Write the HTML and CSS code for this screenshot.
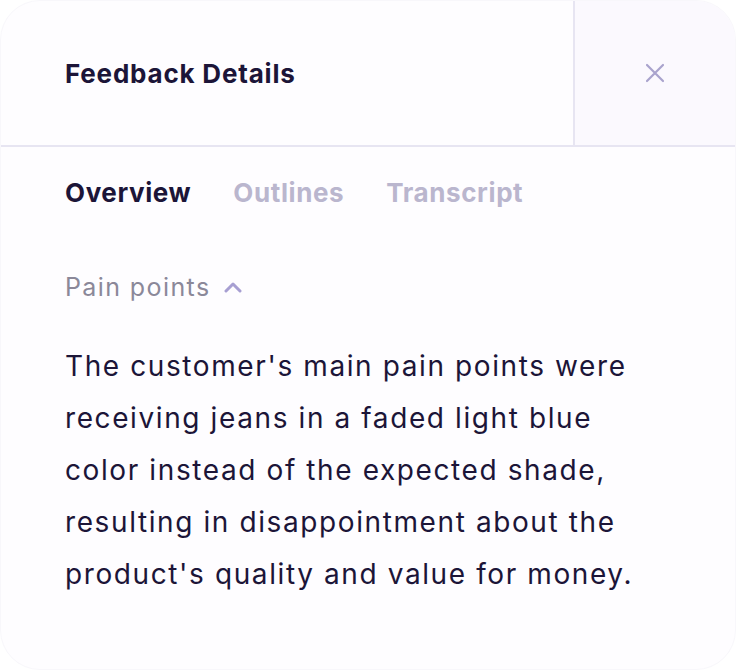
FILE: index.html
```html
<!DOCTYPE html>
<html lang="en">
<head>
  <meta charset="UTF-8" />
  <title>Feedback Details</title>
  <meta name="viewport" content="width=device-width, initial-scale=1" />
  <link rel="stylesheet" href="styles.css">
</head>
<body>
  <div class="panel">
    <div class="panel-header">
      <h2 class="panel-title">Feedback Details</h2>
      <button class="close-btn" type="button" aria-label="Close">
        <svg viewBox="0 0 24 24" width="24" height="24">
          <path d="M4 4L20 20M20 4L4 20" />
        </svg>
      </button>
    </div>

    <div class="tabs">
      <span class="tab active">Overview</span>
      <span class="tab">Outlines</span>
      <span class="tab">Transcript</span>
    </div>

    <div class="section">
      <div class="section-toggle">
        <span>Pain points</span>
        <svg viewBox="0 0 20 12" width="20" height="12">
          <path d="M3 10L10 3L17 10" />
        </svg>
      </div>
      <p class="section-text">The customer's main pain points were receiving jeans in a faded light blue color instead of the expected shade, resulting in disappointment about the product's quality and value for money.</p>
    </div>
  </div>
</body>
</html>
```

FILE: styles.css
```css
body {
  margin: 0;
  background: #fff;
  font-family: Inter, "Noto Sans", sans-serif;
  color: #1c1538;
}
.panel {
  width: 736px;
  height: 670px;
  box-sizing: border-box;
  background: #fefdff;
  border: 1px solid #f8f7fb;
  border-radius: 40px;
  overflow: hidden;
}
.panel-header {
  display: flex;
  height: 144px;
  border-bottom: 2px solid #e7e5f2;
}
.panel-title {
  flex: 1;
  margin: 0;
  padding-left: 64px;
  display: flex;
  align-items: center;
  font-size: 26px;
  font-weight: 700;
  letter-spacing: 0.8px;
  border-right: 2px solid #e7e5f2;
}
.close-btn {
  width: 160px;
  border: none;
  background: #fbf9fe;
  display: flex;
  align-items: center;
  justify-content: center;
  cursor: pointer;
  padding: 0;
}
.close-btn svg {
  stroke: #a9a3cd;
  stroke-width: 2.2;
  stroke-linecap: round;
  fill: none;
}
.tabs {
  display: flex;
  gap: 42px;
  padding: 30px 64px 0;
}
.tab {
  font-size: 26px;
  font-weight: 700;
  letter-spacing: 0.6px;
  color: #bab6ce;
}
.tab.active {
  color: #1c1538;
}
.section {
  padding: 64px 64px 0;
}
.section-toggle {
  display: flex;
  align-items: center;
  gap: 12px;
  font-size: 25px;
  letter-spacing: 1.4px;
  color: #8b8899;
}
.section-toggle svg {
  stroke: #a79fd2;
  stroke-width: 3;
  stroke-linecap: round;
  stroke-linejoin: round;
  fill: none;
}
.section-text {
  margin: 38px 0 0;
  font-size: 28px;
  line-height: 52px;
  letter-spacing: 1.6px;
  max-width: 590px;
}
```
